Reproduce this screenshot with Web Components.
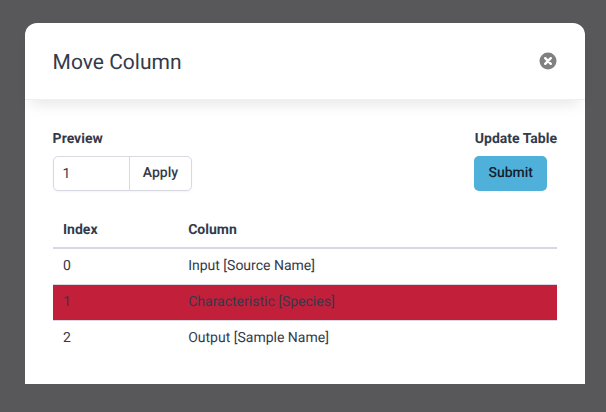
<!DOCTYPE html>
<html>
<head>
<meta charset="utf-8">
<style>
  html, body { margin: 0; height: 100%; }
  body { background: #58585a; font-family: Roboto, "Liberation Sans", sans-serif; color: #343a4a; overflow: hidden; text-rendering: geometricPrecision; }
</style>
</head>
<body>
<move-column-modal></move-column-modal>

<script>
class CloseIcon extends HTMLElement {
  constructor() {
    super();
    this.attachShadow({ mode: "open" });
  }

  connectedCallback() {
    this.shadowRoot.innerHTML = `
      <style>
        :host { display: block; width: 18px; height: 18px; }
        svg { display: block; }
      </style>
      <svg width="18" height="18" viewBox="0 0 18 18">
        <circle cx="9" cy="9" r="8.5" fill="#808080"/>
        <path d="M6.2 6.2l5.6 5.6M11.8 6.2l-5.6 5.6" stroke="#fff" stroke-width="2.4" stroke-linecap="round"/>
      </svg>
    `;
  }
}

class InputGroup extends HTMLElement {
  constructor() {
    super();
    this.attachShadow({ mode: "open" });
  }

  connectedCallback() {
    this.shadowRoot.innerHTML = `
      <style>
        :host { display: flex; width: 139px; height: 35px; box-sizing: border-box; border: 1px solid #d8d8e2; border-radius: 5px; font-size: 14px; box-shadow: 0 1px 2px rgba(0,0,0,.05); }
        .val { width: 75px; box-sizing: border-box; padding-left: 8.4px; line-height: 35px; font-size: 14px; }
        .btn { flex: 1; border-left: 1px solid #d8d8e2; text-align: center; line-height: 33px; font-weight: 500; }
      </style>
      <div class="val">1</div>
      <div class="btn">Apply</div>
    `;
  }
}

class ColumnTable extends HTMLElement {
  constructor() {
    super();
    this.attachShadow({ mode: "open" });
  }

  connectedCallback() {
    this.shadowRoot.innerHTML = `
      <style>
        :host { display: block; font-size: 14px; }
        table { width: 100%; border-collapse: collapse; }
        th, td { text-align: left; padding: 0 10px; }
        th { font-weight: 700; height: 37px; box-sizing: border-box; padding-top: 2px; border-bottom: 2px solid #d8d8e2; }
        td { height: 36px; box-sizing: border-box; padding-bottom: .4px; border-top: 1px solid #d8d8e2; }
        tr:first-child td { border-top: 0; }
        .first { width: 125.2px; }
        .active td { background: #c21f3a; }
      </style>
      <table>
        <thead><tr><th class="first">Index</th><th>Column</th></tr></thead>
        <tbody>
          <tr><td>0</td><td>Input [Source Name]</td></tr>
          <tr class="active"><td>1</td><td>Characteristic [Species]</td></tr>
          <tr><td>2</td><td>Output [Sample Name]</td></tr>
        </tbody>
      </table>
    `;
  }
}

class MoveColumnModal extends HTMLElement {
  constructor() {
    super();
    this.attachShadow({ mode: "open" });
  }

  connectedCallback() {
    this.shadowRoot.innerHTML = `
      <style>
        :host { display: block; padding: 23px 21px 0 25px; }
        .modal { background: #fff; height: 361px; border-radius: 12px 12px 0 0; }
        .header { position: relative; display: flex; justify-content: space-between; align-items: center; height: 77px; box-sizing: border-box; padding: 0 28px 0 27.6px; box-shadow: 0 10px 14px -6px rgba(0,0,0,.1); border-bottom: 1px solid #f0f0f2; }
        h1 { margin: 0; padding-top: 3px; font-size: 21px; font-weight: 400; }
        .body { padding: 30px 28px 0; }
        .controls { display: flex; justify-content: space-between; margin-bottom: 20px; }
        .label { font-size: 14px; font-weight: 700; line-height: 17px; margin-top: 1px; margin-bottom: 8px; margin-left: -.4px; }
        .submit { width: 73px; height: 35px; margin-left: -1px; background: #4fb1d9; border-radius: 5px; color: #14202e; font-size: 14px; font-weight: 500; text-align: center; line-height: 35px; }
      </style>
      <div class="modal">
        <div class="header">
          <h1>Move Column</h1>
          <close-icon></close-icon>
        </div>
        <div class="body">
          <div class="controls">
            <div>
              <div class="label">Preview</div>
              <input-group></input-group>
            </div>
            <div>
              <div class="label">Update Table</div>
              <div class="submit">Submit</div>
            </div>
          </div>
          <column-table></column-table>
        </div>
      </div>
    `;
  }
}

customElements.define("close-icon", CloseIcon);
customElements.define("input-group", InputGroup);
customElements.define("column-table", ColumnTable);
customElements.define("move-column-modal", MoveColumnModal);
</script>
</body>
</html>
